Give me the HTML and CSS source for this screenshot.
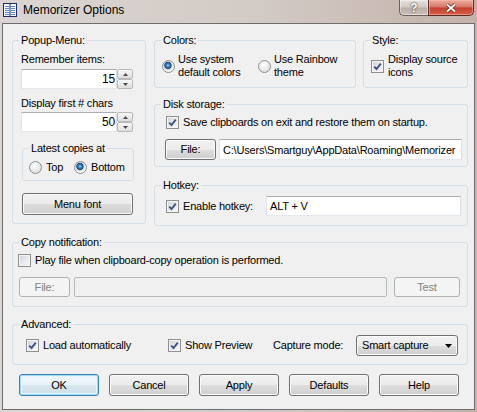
FILE: index.html
```html
<!DOCTYPE html>
<html>
<head>
<meta charset="utf-8">
<title>Memorizer Options</title>
<link rel="stylesheet" href="styles.css">
</head>
<body>
<div class="window">
  <div class="titlebar">
    <svg class="app-icon" viewBox="0 0 14 14">
      <rect x="0.5" y="0.5" width="13" height="13" fill="#f4f7fc" stroke="#1f2c5e"/>
      <line x1="7" y1="1" x2="7" y2="13" stroke="#1f2c5e"/>
      <path d="M2 3.5h4M8 3.5h4M2 5.5h4M8 5.5h4M2 7.5h4M8 7.5h4M2 9.5h4M8 9.5h4M2 11.5h4M8 11.5h4" stroke="#5a86cf"/>
    </svg>
    <span class="title">Memorizer Options</span>
    <div class="caption">
      <div class="cap-btn help">?</div>
      <div class="cap-btn close">
        <svg viewBox="0 0 12 10" width="12" height="10">
          <path d="M2 1.5L10 8.5M10 1.5L2 8.5" stroke="#5a1f18" stroke-width="3.2" fill="none"/>
          <path d="M2 1.5L10 8.5M10 1.5L2 8.5" stroke="#ffffff" stroke-width="1.8" fill="none"/>
        </svg>
      </div>
    </div>
  </div>

  <div class="client">
    <div class="top-row">
      <fieldset class="group popup">
        <legend>Popup-Menu:</legend>
        <div class="popup-body">
          <div class="lbl">Remember items:</div>
          <div class="spin">
            <div class="spin-input">15</div>
            <div class="spin-btns">
              <div class="spin-btn"><svg viewBox="0 0 5 3" width="5" height="3"><path d="M0 3L2.5 0L5 3Z" fill="#4a4a4a"/></svg></div>
              <div class="spin-btn"><svg viewBox="0 0 5 3" width="5" height="3"><path d="M0 0L2.5 3L5 0Z" fill="#4a4a4a"/></svg></div>
            </div>
          </div>
          <div class="lbl lbl2">Display first # chars</div>
          <div class="spin spin2">
            <div class="spin-input">50</div>
            <div class="spin-btns">
              <div class="spin-btn"><svg viewBox="0 0 5 3" width="5" height="3"><path d="M0 3L2.5 0L5 3Z" fill="#4a4a4a"/></svg></div>
              <div class="spin-btn"><svg viewBox="0 0 5 3" width="5" height="3"><path d="M0 0L2.5 3L5 0Z" fill="#4a4a4a"/></svg></div>
            </div>
          </div>
          <fieldset class="group latest">
            <legend>Latest copies at</legend>
            <div class="latest-body">
              <div class="opt opt-top"><span class="rb"></span><span>Top</span></div>
              <div class="opt"><span class="rb on"></span><span>Bottom</span></div>
            </div>
          </fieldset>
          <div class="btn menu-font">Menu font</div>
        </div>
      </fieldset>

      <div class="right-col">
        <div class="row-cs">
          <fieldset class="group colors">
            <legend>Colors:</legend>
            <div class="colors-body">
              <div class="opt opt-sys"><span class="rb on"></span><span class="two">Use system<br>default colors</span></div>
              <div class="opt"><span class="rb"></span><span class="two">Use Rainbow<br>theme</span></div>
            </div>
          </fieldset>
          <fieldset class="group style">
            <legend>Style:</legend>
            <div class="style-body">
              <div class="opt"><span class="cb on"><svg viewBox="0 0 11 11" width="11" height="11"><path d="M2.2 5.6L4.5 8L8.8 2.6" fill="none" stroke="#3e5387" stroke-width="1.9"/></svg></span><span class="two">Display source<br>icons</span></div>
            </div>
          </fieldset>
        </div>

        <fieldset class="group disk">
          <legend>Disk storage:</legend>
          <div class="disk-body">
            <div class="opt chk-row"><span class="cb on"><svg viewBox="0 0 11 11" width="11" height="11"><path d="M2.2 5.6L4.5 8L8.8 2.6" fill="none" stroke="#3e5387" stroke-width="1.9"/></svg></span><span>Save clipboards on exit and restore them on startup.</span></div>
            <div class="file-row">
              <div class="btn file-btn">File:</div>
              <div class="field path">C:\Users\Smartguy\AppData\Roaming\Memorizer</div>
            </div>
          </div>
        </fieldset>

        <fieldset class="group hotkey">
          <legend>Hotkey:</legend>
          <div class="hotkey-body">
            <div class="opt hk-check"><span class="cb on"><svg viewBox="0 0 11 11" width="11" height="11"><path d="M2.2 5.6L4.5 8L8.8 2.6" fill="none" stroke="#3e5387" stroke-width="1.9"/></svg></span><span>Enable hotkey:</span></div>
            <div class="field hk-field">ALT + V</div>
          </div>
        </fieldset>
      </div>
    </div>

    <fieldset class="group copy">
      <legend>Copy notification:</legend>
      <div class="copy-body">
        <div class="opt chk-row"><span class="cb"></span><span>Play file when clipboard-copy operation is performed.</span></div>
        <div class="copy-row">
          <div class="btn disabled copy-file">File:</div>
          <div class="field disabled copy-field"></div>
          <div class="btn disabled test-btn">Test</div>
        </div>
      </div>
    </fieldset>

    <fieldset class="group advanced">
      <legend>Advanced:</legend>
      <div class="adv-body">
        <div class="opt adv-load"><span class="cb on"><svg viewBox="0 0 11 11" width="11" height="11"><path d="M2.2 5.6L4.5 8L8.8 2.6" fill="none" stroke="#3e5387" stroke-width="1.9"/></svg></span><span>Load automatically</span></div>
        <div class="opt adv-preview"><span class="cb on"><svg viewBox="0 0 11 11" width="11" height="11"><path d="M2.2 5.6L4.5 8L8.8 2.6" fill="none" stroke="#3e5387" stroke-width="1.9"/></svg></span><span>Show Preview</span></div>
        <div class="adv-label">Capture mode:</div>
        <div class="btn select"><span>Smart capture</span><svg viewBox="0 0 7 4" width="7" height="4"><path d="M0 0H7L3.5 4Z" fill="#000"/></svg></div>
      </div>
    </fieldset>

    <div class="buttons">
      <div class="btn dlg default">OK</div>
      <div class="btn dlg">Cancel</div>
      <div class="btn dlg">Apply</div>
      <div class="btn dlg">Defaults</div>
      <div class="btn dlg">Help</div>
    </div>
  </div>
</div>
</body>
</html>
```
FILE: styles.css
```css
* { box-sizing: border-box; }
html, body { margin: 0; padding: 0; }
body {
  width: 477px;
  height: 412px;
  overflow: hidden;
  font-family: "Liberation Sans", Arial, sans-serif;
  font-size: 11px;
  letter-spacing: -0.2px;
  color: #000;
  background: #c9bdb7;
}
.window {
  width: 477px;
  height: 412px;
  display: flex;
  flex-direction: column;
  background: linear-gradient(to right, #dad5d2 0%, #d2cac5 55%, #c4b1aa 100%);
}

/* title bar */
.titlebar {
  height: 23px;
  flex: none;
  display: flex;
  align-items: flex-start;
  padding-left: 3px;
}
.app-icon { width: 14px; height: 14px; margin-top: 3px; flex: none; }
.title {
  font-size: 12px;
  letter-spacing: 0;
  line-height: 14px;
  margin-top: 3px;
  margin-left: 6px;
  color: #000;
}
.caption { margin-left: auto; margin-right: 3px; display: flex; }
.cap-btn {
  height: 16px;
  display: flex;
  align-items: center;
  justify-content: center;
}
.help {
  width: 29px;
  border: 1px solid #6b605b;
  border-top: none;
  border-right: none;
  border-radius: 0 0 0 5px;
  background: linear-gradient(#e6e0dd 0%, #d3cac6 45%, #bcafa9 55%, #c9bdb7 100%);
  box-shadow: inset 0 0 0 1px rgba(255,255,255,0.45);
  color: #fff;
  font-weight: bold;
  font-size: 12px;
  letter-spacing: 0;
  text-shadow: 0 0 2px #4a3f3a, 0 0 1px #4a3f3a;
}
.close {
  width: 46px;
  border: 1px solid #5b2a24;
  border-top: none;
  border-radius: 0 0 5px 0;
  background: linear-gradient(#eaa999 0%, #d9806f 42%, #c3402f 55%, #d8604a 100%);
  box-shadow: inset 0 0 0 1px rgba(255,200,190,0.5);
}

/* client */
.client {
  flex: 1;
  margin: 0 2px 2px 2px;
  border: 1px solid #6d6d6d;
  background: #f0f0f0;
  padding: 10px 6px 0 9px;
}

/* group boxes */
.group {
  margin: 0;
  padding: 0;
  min-width: 0;
  border: 1px solid #d5dfe5;
  border-radius: 3px;
}
.group > legend {
  padding: 0 2px;
  margin-left: 6px;
  line-height: 13px;
}

.top-row { display: flex; gap: 8px; align-items: flex-start; }
.popup { width: 134px; }
.popup-body { padding: 6px 0 8px 8px; }
.lbl { line-height: 13px; white-space: nowrap; }
.lbl2 { margin-top: 8px; }

.spin { margin-top: 3px; width: 112px; height: 20px; display: flex; }
.spin2 { margin-top: 2px; }
.spin-input {
  flex: 1;
  background: #fff;
  border: 1px solid;
  border-color: #abadb3 #dbdfe6 #e3e9ef #e2e3ea;
  text-align: right;
  padding-right: 1px;
  font-size: 12px;
  line-height: 18px;
}
.spin-btns { width: 16px; display: flex; flex-direction: column; }
.spin-btn {
  flex: 1;
  border: 1px solid #b9b9b9;
  border-radius: 2px;
  background: linear-gradient(#f7f7f7, #dedede);
  display: flex;
  align-items: center;
  justify-content: center;
}

.latest { width: 112px; margin-top: 10px; margin-left: 1px; }
.latest-body { padding: 6px 0 6px 6px; display: flex; }
.opt { display: flex; align-items: center; line-height: 13px; white-space: nowrap; }
.opt-top { width: 45px; }

.rb {
  width: 13px;
  height: 13px;
  flex: none;
  border-radius: 50%;
  border: 1px solid #8e8f8f;
  background: radial-gradient(circle at 40% 35%, #ffffff 0%, #e9eaeb 50%, #cfd1d3 100%);
  margin-right: 4px;
}
.rb.on {
  background: radial-gradient(circle at 45% 40%, #9ad2f6 0px, #2f73b4 2px, #184a80 3.3px, #c9ccd0 3.9px, #eeeff0 5px, #f8f8f8 6px);
}
.cb {
  width: 13px;
  height: 13px;
  flex: none;
  border: 1px solid #8e8f8f;
  background: linear-gradient(135deg, #cdd1d7 0%, #e6e8eb 50%, #f8f8f9 100%);
  box-shadow: inset 0 0 0 1px #f5f5f5;
  margin-right: 4px;
  display: flex;
  align-items: center;
  justify-content: center;
}
.cb svg { display: block; }

.menu-font { width: 111px; height: 22px; margin-top: 12px; margin-left: 1px; }

.btn {
  border: 1px solid #707070;
  border-radius: 3px;
  background: linear-gradient(#f2f2f2 0%, #ebebeb 50%, #dddddd 51%, #cfcfcf 100%);
  box-shadow: inset 0 0 0 1px #fbfbfb;
  display: flex;
  align-items: center;
  justify-content: center;
  line-height: 13px;
  white-space: nowrap;
}
.btn.disabled {
  border-color: #adb2b5;
  background: #f4f4f4;
  box-shadow: none;
  color: #838383;
}

.right-col { width: 314px; display: flex; flex-direction: column; }
.row-cs { display: flex; gap: 7px; }
.colors { width: 202px; }
.style { width: 105px; }
.colors-body { padding: 6px 0 8px 7px; display: flex; }
.opt-sys { width: 96px; }
.rb + .two { margin-left: -1px; }
.two { line-height: 13px; }
.style-body { padding: 6px 0 8px 7px; display: flex; }

.disk { margin-top: 10px; }
.disk-body { padding: 5px 0 6px 10px; }
.chk-row { height: 13px; margin-left: 1px; }
.file-row { margin-top: 10px; display: flex; gap: 3px; height: 21px; }
.file-btn { width: 51px; }
.field {
  background: #fff;
  border: 1px solid;
  border-color: #abadb3 #dbdfe6 #e3e9ef #e2e3ea;
  padding-left: 3px;
  display: flex;
  align-items: center;
  white-space: nowrap;
  overflow: hidden;
}
.path { width: 243px; }

.hotkey { margin-top: 12px; }
.hotkey-body { padding: 4px 0 9px 11px; display: flex; align-items: center; }
.hk-check { width: 100px; }
.hk-field { width: 195px; height: 20px; }

.copy { margin-top: 10px; }
.copy-body { padding: 5px 0 9px 5px; }
.copy-body .chk-row { margin-left: 0; }
.copy-row { margin-top: 10px; display: flex; height: 20px; }
.copy-file { width: 51px; margin-left: 1px; }
.field.disabled {
  background: #f0f0f0;
  border: 1px solid #b6babd;
  border-radius: 2px;
}
.copy-field { width: 313px; margin-left: 4px; }
.test-btn { width: 66px; margin-left: 7px; }

.advanced { margin-top: 11px; }
.adv-body { padding: 4px 0 8px 13px; display: flex; align-items: center; }
.adv-load { width: 142px; }
.adv-preview { width: 105px; }
.adv-label { width: 83px; line-height: 13px; }
.select {
  width: 102px;
  height: 21px;
  justify-content: space-between;
  padding: 0 5px 0 5px;
}

.buttons { margin-top: 9px; display: flex; gap: 10px; padding-left: 7px; }
.dlg { width: 80px; height: 22px; }
.dlg.default {
  border-color: #3c7fb1;
  box-shadow: inset 0 0 0 1px #9fdcf3, inset 0 0 0 2px #e6f5fc;
  background: linear-gradient(#f0f8fc 0%, #e8f2f8 50%, #d9e7ef 51%, #cfe0ea 100%);
}
```
